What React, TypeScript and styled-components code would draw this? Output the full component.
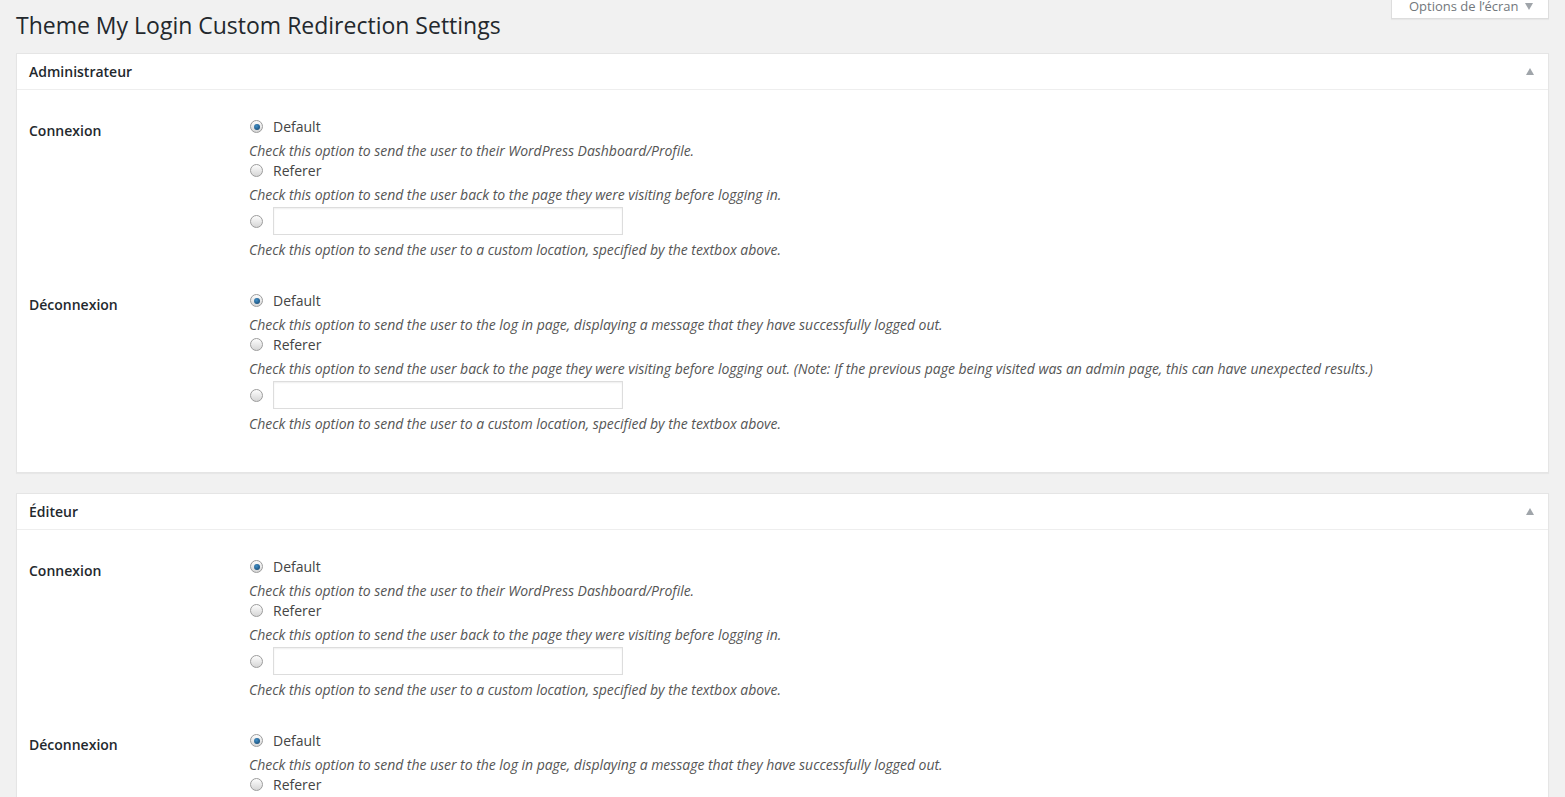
import React from 'react'
import styled, { createGlobalStyle } from 'styled-components'

const GlobalStyle = createGlobalStyle`
  html, body {
    margin: 0;
    padding: 0;
    background: #f1f1f1;
    font-family: "Open Sans", "Noto Sans", sans-serif;
    color: #444;
    font-size: 13px;
  }
`

type Opt = { label?: string; desc: string; checked?: boolean; input?: boolean }
type Field = { name: string; options: Opt[] }

const loginOptions: Opt[] = [
  { label: 'Default', checked: true, desc: 'Check this option to send the user to their WordPress Dashboard/Profile.' },
  { label: 'Referer', desc: 'Check this option to send the user back to the page they were visiting before logging in.' },
  { input: true, desc: 'Check this option to send the user to a custom location, specified by the textbox above.' },
]

const logoutOptions: Opt[] = [
  { label: 'Default', checked: true, desc: 'Check this option to send the user to the log in page, displaying a message that they have successfully logged out.' },
  { label: 'Referer', desc: 'Check this option to send the user back to the page they were visiting before logging out. (Note: If the previous page being visited was an admin page, this can have unexpected results.)' },
  { input: true, desc: 'Check this option to send the user to a custom location, specified by the textbox above.' },
]

const fields: Field[] = [
  { name: 'Connexion', options: loginOptions },
  { name: 'Déconnexion', options: logoutOptions },
]

const roles = ['Administrateur', 'Éditeur']

const App = () => {
  return (
    <SWrap>
      <GlobalStyle />
      <SHeader>
        <STitle>Theme My Login Custom Redirection Settings</STitle>
        <SScreenOptions>
          Options de l’écran <SArrowDown />
        </SScreenOptions>
      </SHeader>
      {roles.map((role) => (
        <SPostbox key={role}>
          <SPostboxHeader>
            <SPostboxTitle>{role}</SPostboxTitle>
            <SArrowUp />
          </SPostboxHeader>
          <SInside>
            {fields.map((field) => (
              <SRow key={field.name}>
                <SLabel>{field.name}</SLabel>
                <SCell>
                  {field.options.map((opt, i) => (
                    <div key={i}>
                      <SOptionLine $input={opt.input}>
                        <SRadio $checked={opt.checked} />
                        {opt.input ? <STextInput type="text" /> : <span>{opt.label}</span>}
                      </SOptionLine>
                      <SDescription>{opt.desc}</SDescription>
                    </div>
                  ))}
                </SCell>
              </SRow>
            ))}
          </SInside>
        </SPostbox>
      ))}
    </SWrap>
  )
}

const SWrap = styled.div`
  padding: 0 16px 40px 16px;
`

const SHeader = styled.div`
  display: flex;
  justify-content: space-between;
  align-items: flex-start;
  margin-bottom: 13px;
`

const STitle = styled.h1`
  margin: 10px 0 0 0;
  font-size: 23px;
  font-weight: 400;
  line-height: 30px;
  color: #23282d;
`

const SScreenOptions = styled.div`
  display: flex;
  align-items: center;
  gap: 6px;
  margin-top: -9px;
  width: 158px;
  height: 28px;
  box-sizing: border-box;
  padding: 3px 0 0 17px;
  background: #fff;
  border: 1px solid #ddd;
  border-top: none;
  box-shadow: 0 1px 1px rgba(0, 0, 0, 0.04);
  color: #72777c;
  font-size: 13px;
`

const SArrowDown = styled.span`
  width: 0;
  height: 0;
  border-left: 4px solid transparent;
  border-right: 4px solid transparent;
  border-top: 7px solid #a0a5aa;
  margin-top: 1px;
`

const SArrowUp = styled.span`
  width: 0;
  height: 0;
  border-left: 4px solid transparent;
  border-right: 4px solid transparent;
  border-bottom: 7px solid #a0a5aa;
`

const SPostbox = styled.div`
  background: #fff;
  border: 1px solid #e5e5e5;
  box-shadow: 0 1px 1px rgba(0, 0, 0, 0.04);
  margin-bottom: 20px;
`

const SPostboxHeader = styled.div`
  display: flex;
  justify-content: space-between;
  align-items: center;
  height: 36px;
  padding: 0 14px 1px 12px;
  border-bottom: 1px solid #eee;
  box-sizing: border-box;
`

const SPostboxTitle = styled.div`
  font-size: 14px;
  font-weight: 600;
  color: #23282d;
`

const SInside = styled.div`
  padding: 12px 12px 22px 12px;
`

const SRow = styled.div`
  display: flex;
`

const SLabel = styled.div`
  width: 220px;
  flex-shrink: 0;
  padding-top: 20px;
  font-size: 14px;
  font-weight: 600;
  line-height: 18px;
  color: #23282d;
`

const SCell = styled.div`
  flex: 1;
  padding: 15px 0 16px 0;
`

const SOptionLine = styled.div<{ $input?: boolean }>`
  display: flex;
  align-items: center;
  height: ${(p) => (p.$input ? '28px' : '19px')};
  margin-top: ${(p) => (p.$input ? '2px' : '0')};
  font-size: 14px;
  color: #444;
`

const SRadio = styled.span<{ $checked?: boolean }>`
  position: relative;
  width: 11px;
  height: 11px;
  margin: 0 10px 0 1px;
  border-radius: 50%;
  border: 1px solid #9c9c9c;
  background: linear-gradient(#fdfdfd, #d6d6d6);
  flex-shrink: 0;
  &::after {
    content: '';
    display: ${(p) => (p.$checked ? 'block' : 'none')};
    position: absolute;
    left: 2.5px;
    top: 2.5px;
    width: 6px;
    height: 6px;
    border-radius: 50%;
    background: radial-gradient(circle at 40% 35%, #3f8fc8, #123f66);
  }
`

const STextInput = styled.input`
  width: 350px;
  height: 28px;
  box-sizing: border-box;
  border: 1px solid #ddd;
  box-shadow: inset 0 1px 2px rgba(0, 0, 0, 0.07);
  background: #fff;
  padding: 3px 5px;
  font-family: inherit;
  font-size: 14px;
  outline: none;
`

const SDescription = styled.p`
  margin: 4px 0 0 0;
  font-size: 14px;
  line-height: 21px;
  font-style: italic;
  letter-spacing: -0.03px;
  color: #555;
`

export default App
